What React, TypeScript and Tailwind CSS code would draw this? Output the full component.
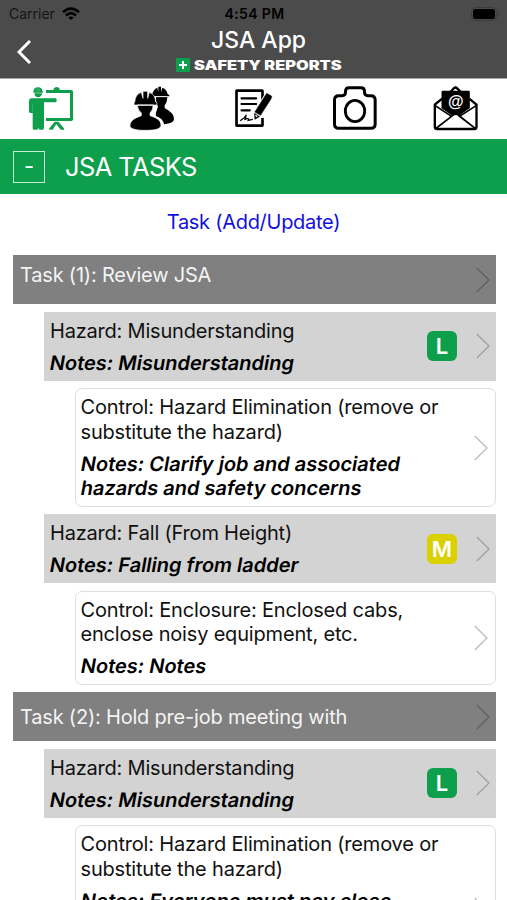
import type { ReactNode } from "react";

function WorkerIcon() {
  return (
    <svg viewBox="77 22 150 138" className="h-[46px] w-[50px]" fill="#0d9f4b">
      <path d="M100 40a13 11 0 0 1 26 0l2 2v3H99v-3zM102 47h23c0 7-5 12-11.500 12S102 54 102 47z" />
      <path d="M108 33v8M113 31v10M118 33v8" stroke="#fff" strokeWidth="1" opacity=".6" />
      <path d="M94 62h72q3 0 3 6t-3 6h-35v78q0 4-4 4h-10l-3-5-3 5h-10q-4 0-4-4v-46h-7q-4 0-4-5V70q0-8 6-8z" />
      <path d="M97 78v24" stroke="#fff" strokeWidth="1.200" opacity=".5" />
      <path d="M137 37h22q2-9 10-9t10 9h34q5 0 5 5v83q0 5-5 5h-76v-9h72V46h-72z" />
      <path d="M163 132h11l17 20v4h-10l-13-17-11 17h-10v-4z" />
    </svg>
  );
}

function CrewIcon() {
  return (
    <svg viewBox="381 22 150 138" className="h-[46px] w-[50px]">
      <path d="M457 49q3-14 15-19l3 14V27h8v17l4-14q14 5 16 20l5 2v4h-48zM468 58h34q-1 17-8 25v7c6 8 28 12 28 34q0 13-30 16-3-18-24-25-3-9 2-16l4-13q-6-6-6-28z" />
      <path d="M404 73q2-23 20-29l5 18V41h14v21l5-18q18 6 19 29l4 3v6h-69v-6zM412 82h48q-1 15-10 24v8c12 5 33 9 33 29 0 11-18 15-46 15s-47-4-47-14c0-19 22-25 34-30v-8q-11-9-12-24z" stroke="#fff" strokeWidth="2" />
      <path d="M413 83h47M464 57h38" stroke="#fff" strokeWidth="2" />
    </svg>
  );
}

function ReportIcon() {
  return (
    <svg viewBox="85.500 22 150 138" className="h-[46px] w-[50px]" fill="none" stroke="#000">
      <path d="M189 66V40q0-1-1-1h-76q-1 0-1 1v103q0 1 1 1h76q1 0 1-1v-22" strokeWidth="8" />
      <path d="M126 62h44M126 79h44M126 98h25" strokeWidth="6.500" strokeLinecap="round" />
      <path d="M122 129q16-10 18-18 0 9-5 15 9-5 13-2l-2 4 14-3" strokeWidth="3.500" />
      <path d="M201 46l17 10-3 9-33 51-17 10v-21l32-51z" fill="#fff" stroke="#fff" strokeWidth="7" strokeLinejoin="round" />
      <path d="M202 47l15 9-3 9-31 48-17-10 31-49zM165 107l15 10-14 8z" fill="#000" strokeWidth="1.500" strokeLinejoin="round" />
      <path d="M168 113l5 4" stroke="#fff" strokeWidth="4" />
    </svg>
  );
}

function CameraIcon() {
  return (
    <svg viewBox="389.500 22 150 138" className="h-[46px] w-[50px]" fill="none" stroke="#000" strokeWidth="9">
      <path d="M416 54h10q9 0 10-9v-4q0-11 11-11h35q11 0 11 11v4q1 9 10 9h9q13 0 13 13v72q0 13-13 13h-96q-13 0-13-13V67q0-13 13-13z" />
      <ellipse cx="464.500" cy="100" rx="29" ry="32" strokeWidth="8.500" />
    </svg>
  );
}

function MailIcon() {
  return (
    <svg viewBox="693.500 22 150 138" className="h-[46px] w-[50px]">
      <path d="M727 63l-22 18v66q0 7 7 7h111q7 0 7-7V81l-22-18M752 43l10-11q5-5 10 0l11 11" fill="none" stroke="#000" strokeWidth="7" />
      <path d="M725 43q0-4 4-4h77q4 0 4 4v48l-33 24q-9-7-18 0l-34-23z" />
      <path d="M706 84l49 32-47 36M829 84l-50 32 47 36M708 153l51-40q9-7 18 0l50 40" fill="none" stroke="#000" strokeWidth="5" />
      <text x="768" y="89" textAnchor="middle" fill="#fff" fontSize="48" fontWeight="700" fontFamily="Liberation Sans, sans-serif">@</text>
    </svg>
  );
}

function Chevron({ color }: { color: string }) {
  return (
    <svg viewBox="0 0 14 26" className="h-[26px] w-[14px] shrink-0" fill="none" stroke={color} strokeWidth="1.300">
      <path d="M.8 1L13 13 .8 25" />
    </svg>
  );
}

function Task({ children, raised = false }: { children: ReactNode; raised?: boolean }) {
  return (
    <div className="flex h-[49px] items-center justify-between bg-[#808080] pr-[6px] pl-[7px] text-[#f4f4f4]">
      <span className={`tracking-[-0.200px] ${raised ? "pb-[10px]" : "pt-px"}`}>{children}</span>
      <Chevron color="#606060" />
    </div>
  );
}

function Note({ children }: { children: ReactNode }) {
  return <p className="-skew-x-[10deg] font-semibold text-black">{children}</p>;
}

function Hazard({ title, notes, level }: { title: string; notes: string; level: "L" | "M" }) {
  return (
    <div className="ml-[31px] flex h-[69px] items-center bg-[#d3d3d3] pr-[6px] pl-[6px]">
      <div className="flex-1 pt-px">
        <p className="tracking-[-0.200px]">Hazard: {title}</p>
        <div className="mt-[7.600px]">
          <Note>Notes: {notes}</Note>
        </div>
      </div>
      <span className={`mr-[19px] flex size-[30px] items-center justify-center rounded-[6px] text-[22px] font-semibold text-white ${level === "L" ? "bg-[#0d9f4b]" : "bg-[#dbd000]"}`}>
        {level}
      </span>
      <Chevron color="#a0a0a0" />
    </div>
  );
}

function Control({ lines, notes, tall = false }: { lines: string[]; notes: string[]; tall?: boolean }) {
  return (
    <div className={`ml-[61.500px] flex items-center rounded-[7px] border-[1.500px] border-[#dedede] bg-white pt-[6px] pr-[7px] pb-[5.200px] pl-[5px] ${tall ? "h-[169px]" : ""}`}>
      <div className="flex-1 self-start whitespace-nowrap">
        {lines.map((line) => (
          <p key={line} className="tracking-[-0.180px]">{line}</p>
        ))}
        <div className="mt-[7.600px]">
          {notes.map((line) => (
            <Note key={line}>{line}</Note>
          ))}
        </div>
      </div>
      <Chevron color="#bcbcbc" />
    </div>
  );
}

export default function App() {
  return (
    <div className="h-[900px] w-[507px] overflow-hidden bg-white font-['Inter',sans-serif] text-[20px] leading-[24.400px] text-[#111]">
      <header className="h-[79px] border-b border-[#aaa] bg-[#4b4b4b]">
        <div className="grid h-[27px] grid-cols-3 items-center pr-[7px] pl-[9px] text-[14px] leading-none text-[#151515]">
          <div className="flex items-center gap-[7px]">
            <span>Carrier</span>
            <svg viewBox="0 0 18 14" className="h-[14px] w-[18px]" fill="none" stroke="#000" strokeWidth="2.700">
              <path d="M1 5.300Q9-2 17 5.300M4 8.400q5-4.500 10 0" />
              <path d="M9 13L6.300 10.400q2.700-2 5.400 0z" fill="#000" stroke="none" />
            </svg>
          </div>
          <span className="text-center font-semibold tracking-[0.350px] text-black">4:54 PM</span>
          <svg viewBox="0 0 29 14" className="h-[14px] w-[29px] justify-self-end">
            <rect x=".5" y=".5" width="25" height="13" rx="4" fill="none" stroke="#3c3c3c" />
            <rect x="2" y="2" width="22" height="10" rx="2.500" />
            <path d="M27 5q2 2 0 4z" fill="#303030" />
          </svg>
        </div>
        <div className="grid h-[51px] grid-cols-[60px_1fr_60px]">
          <svg viewBox="0 0 14 24" className="mt-[13px] ml-[16.500px] h-[24px] w-[14px]" fill="none" stroke="#fff" strokeWidth="3">
            <path d="M13 1L2 12l11 11" />
          </svg>
          <div className="flex flex-col items-center text-white">
            <h1 className="ml-[10px] text-[23px] leading-[27px] font-medium">JSA App</h1>
            <div className="mt-[4px] ml-[12px] flex h-[14px] w-[167px] items-center gap-[4px]">
              <svg viewBox="0 0 14 14" className="size-[14px] shrink-0">
                <path fill="#0d9f4b" d="M0 0h14v14H0z" />
                <path d="M7 3v8M3 7h8" stroke="#fff" strokeWidth="2" />
              </svg>
              <span className="origin-left scale-x-[1.310] pt-[2px] text-[12.500px] leading-none font-black whitespace-nowrap">SAFETY REPORTS</span>
            </div>
          </div>
        </div>
      </header>
      <nav className="grid h-[60px] grid-cols-5 justify-items-center pt-[6.300px]">
        <WorkerIcon />
        <CrewIcon />
        <ReportIcon />
        <CameraIcon />
        <MailIcon />
      </nav>
      <section className="flex h-[55px] items-center gap-[20px] bg-[#0d9f4b] pl-[13px] text-white">
        <span className="flex size-[32px] items-center justify-center border border-[#c5f0d5] text-[22px]">-</span>
        <h2 className="pt-[2px] text-[25.500px] tracking-[-0.600px]">JSA TASKS</h2>
      </section>
      <a className="mt-[16px] block text-center tracking-[-0.280px] text-[#1111dd]">Task (Add/Update)</a>
      <main className="mt-[21px] flex flex-col gap-[7.500px] pr-[11px] pl-[13px]">
        <Task raised>Task (1): Review JSA</Task>
        <Hazard title="Misunderstanding" notes="Misunderstanding" level="L" />
        <Control lines={["Control: Hazard Elimination (remove or", "substitute the hazard)"]} notes={["Notes: Clarify job and associated", "hazards and safety concerns"]} />
        <Hazard title="Fall (From Height)" notes="Falling from ladder" level="M" />
        <Control lines={["Control: Enclosure: Enclosed cabs,", "enclose noisy equipment, etc."]} notes={["Notes: Notes"]} />
        <Task>Task (2): Hold pre-job meeting with</Task>
        <Hazard title="Misunderstanding" notes="Misunderstanding" level="L" />
        <Control tall lines={["Control: Hazard Elimination (remove or", "substitute the hazard)"]} notes={["Notes: Everyone must pay close"]} />
      </main>
    </div>
  );
}
